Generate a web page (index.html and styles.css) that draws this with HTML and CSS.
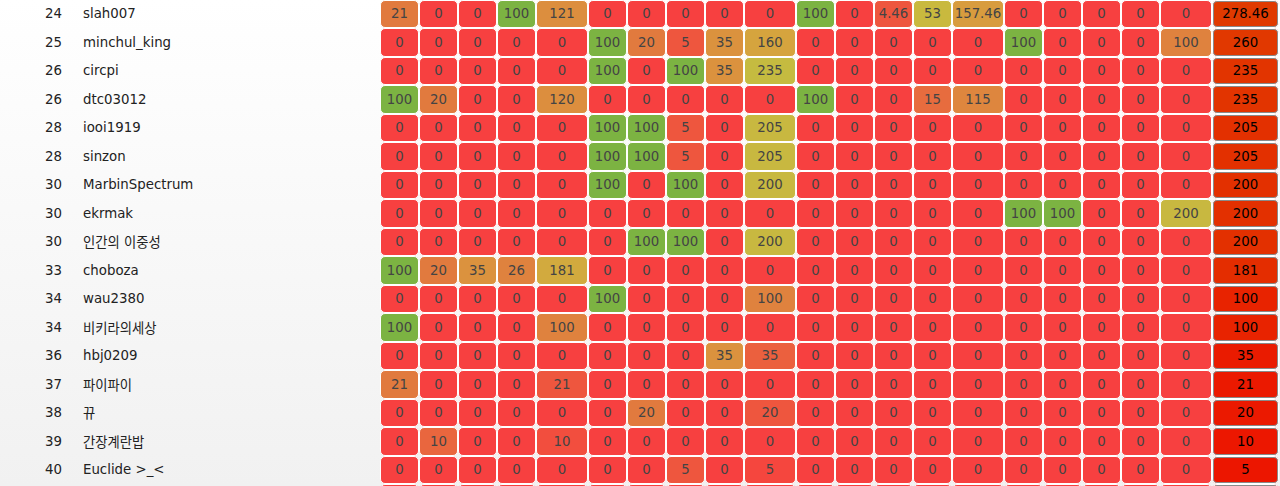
FILE: index.html
```html
<!DOCTYPE html>
<html lang="ko">
<head>
<meta charset="utf-8">
<title>Scoreboard</title>
<link rel="stylesheet" href="styles.css">
</head>
<body>
<div class="board">
  <div class="row">
    <span class="rank">24</span><span class="name">slah007</span>
    <span class="c h20">21</span><span class="c">0</span><span class="c">0</span><span class="c g">100</span><span class="c h30">121</span>
    <span class="c">0</span><span class="c">0</span><span class="c">0</span><span class="c">0</span><span class="c">0</span>
    <span class="c g">100</span><span class="c">0</span><span class="c h5">4.46</span><span class="c h53">53</span><span class="c h39">157.46</span>
    <span class="c">0</span><span class="c">0</span><span class="c">0</span><span class="c">0</span><span class="c">0</span>
    <span class="total" style="background:rgb(224,58,0)">278.46</span>
  </div>
  <div class="row">
    <span class="rank">25</span><span class="name">minchul_king</span>
    <span class="c">0</span><span class="c">0</span><span class="c">0</span><span class="c">0</span><span class="c">0</span>
    <span class="c g">100</span><span class="c h20">20</span><span class="c h5">5</span><span class="c h35">35</span><span class="c h40">160</span>
    <span class="c">0</span><span class="c">0</span><span class="c">0</span><span class="c">0</span><span class="c">0</span>
    <span class="c g">100</span><span class="c">0</span><span class="c">0</span><span class="c">0</span><span class="c h25">100</span>
    <span class="total" style="background:rgb(225,56,0)">260</span>
  </div>
  <div class="row">
    <span class="rank">26</span><span class="name">circpi</span>
    <span class="c">0</span><span class="c">0</span><span class="c">0</span><span class="c">0</span><span class="c">0</span>
    <span class="c g">100</span><span class="c">0</span><span class="c g">100</span><span class="c h35">35</span><span class="c h59">235</span>
    <span class="c">0</span><span class="c">0</span><span class="c">0</span><span class="c">0</span><span class="c">0</span>
    <span class="c">0</span><span class="c">0</span><span class="c">0</span><span class="c">0</span><span class="c">0</span>
    <span class="total" style="background:rgb(226,52,0)">235</span>
  </div>
  <div class="row">
    <span class="rank">26</span><span class="name">dtc03012</span>
    <span class="c g">100</span><span class="c h20">20</span><span class="c">0</span><span class="c">0</span><span class="c h30">120</span>
    <span class="c">0</span><span class="c">0</span><span class="c">0</span><span class="c">0</span><span class="c">0</span>
    <span class="c g">100</span><span class="c">0</span><span class="c">0</span><span class="c h15">15</span><span class="c h29">115</span>
    <span class="c">0</span><span class="c">0</span><span class="c">0</span><span class="c">0</span><span class="c">0</span>
    <span class="total" style="background:rgb(226,52,0)">235</span>
  </div>
  <div class="row">
    <span class="rank">28</span><span class="name">iooi1919</span>
    <span class="c">0</span><span class="c">0</span><span class="c">0</span><span class="c">0</span><span class="c">0</span>
    <span class="c g">100</span><span class="c g">100</span><span class="c h5">5</span><span class="c">0</span><span class="c h50">205</span>
    <span class="c">0</span><span class="c">0</span><span class="c">0</span><span class="c">0</span><span class="c">0</span>
    <span class="c">0</span><span class="c">0</span><span class="c">0</span><span class="c">0</span><span class="c">0</span>
    <span class="total" style="background:rgb(227,48,0)">205</span>
  </div>
  <div class="row">
    <span class="rank">28</span><span class="name">sinzon</span>
    <span class="c">0</span><span class="c">0</span><span class="c">0</span><span class="c">0</span><span class="c">0</span>
    <span class="c g">100</span><span class="c g">100</span><span class="c h5">5</span><span class="c">0</span><span class="c h50">205</span>
    <span class="c">0</span><span class="c">0</span><span class="c">0</span><span class="c">0</span><span class="c">0</span>
    <span class="c">0</span><span class="c">0</span><span class="c">0</span><span class="c">0</span><span class="c">0</span>
    <span class="total" style="background:rgb(227,48,0)">205</span>
  </div>
  <div class="row">
    <span class="rank">30</span><span class="name">MarbinSpectrum</span>
    <span class="c">0</span><span class="c">0</span><span class="c">0</span><span class="c">0</span><span class="c">0</span>
    <span class="c g">100</span><span class="c">0</span><span class="c g">100</span><span class="c">0</span><span class="c h50">200</span>
    <span class="c">0</span><span class="c">0</span><span class="c">0</span><span class="c">0</span><span class="c">0</span>
    <span class="c">0</span><span class="c">0</span><span class="c">0</span><span class="c">0</span><span class="c">0</span>
    <span class="total" style="background:rgb(227,48,0)">200</span>
  </div>
  <div class="row">
    <span class="rank">30</span><span class="name">ekrmak</span>
    <span class="c">0</span><span class="c">0</span><span class="c">0</span><span class="c">0</span><span class="c">0</span>
    <span class="c">0</span><span class="c">0</span><span class="c">0</span><span class="c">0</span><span class="c">0</span>
    <span class="c">0</span><span class="c">0</span><span class="c">0</span><span class="c">0</span><span class="c">0</span>
    <span class="c g">100</span><span class="c g">100</span><span class="c">0</span><span class="c">0</span><span class="c h50">200</span>
    <span class="total" style="background:rgb(227,48,0)">200</span>
  </div>
  <div class="row">
    <span class="rank">30</span><span class="name">인간의 이중성</span>
    <span class="c">0</span><span class="c">0</span><span class="c">0</span><span class="c">0</span><span class="c">0</span>
    <span class="c">0</span><span class="c g">100</span><span class="c g">100</span><span class="c">0</span><span class="c h50">200</span>
    <span class="c">0</span><span class="c">0</span><span class="c">0</span><span class="c">0</span><span class="c">0</span>
    <span class="c">0</span><span class="c">0</span><span class="c">0</span><span class="c">0</span><span class="c">0</span>
    <span class="total" style="background:rgb(227,48,0)">200</span>
  </div>
  <div class="row">
    <span class="rank">33</span><span class="name">choboza</span>
    <span class="c g">100</span><span class="c h20">20</span><span class="c h35">35</span><span class="c h25">26</span><span class="c h45">181</span>
    <span class="c">0</span><span class="c">0</span><span class="c">0</span><span class="c">0</span><span class="c">0</span>
    <span class="c">0</span><span class="c">0</span><span class="c">0</span><span class="c">0</span><span class="c">0</span>
    <span class="c">0</span><span class="c">0</span><span class="c">0</span><span class="c">0</span><span class="c">0</span>
    <span class="total" style="background:rgb(228,45,0)">181</span>
  </div>
  <div class="row">
    <span class="rank">34</span><span class="name">wau2380</span>
    <span class="c">0</span><span class="c">0</span><span class="c">0</span><span class="c">0</span><span class="c">0</span>
    <span class="c g">100</span><span class="c">0</span><span class="c">0</span><span class="c">0</span><span class="c h25">100</span>
    <span class="c">0</span><span class="c">0</span><span class="c">0</span><span class="c">0</span><span class="c">0</span>
    <span class="c">0</span><span class="c">0</span><span class="c">0</span><span class="c">0</span><span class="c">0</span>
    <span class="total" style="background:rgb(232,35,0)">100</span>
  </div>
  <div class="row">
    <span class="rank">34</span><span class="name">비키라의세상</span>
    <span class="c g">100</span><span class="c">0</span><span class="c">0</span><span class="c">0</span><span class="c h25">100</span>
    <span class="c">0</span><span class="c">0</span><span class="c">0</span><span class="c">0</span><span class="c">0</span>
    <span class="c">0</span><span class="c">0</span><span class="c">0</span><span class="c">0</span><span class="c">0</span>
    <span class="c">0</span><span class="c">0</span><span class="c">0</span><span class="c">0</span><span class="c">0</span>
    <span class="total" style="background:rgb(232,35,0)">100</span>
  </div>
  <div class="row">
    <span class="rank">36</span><span class="name">hbj0209</span>
    <span class="c">0</span><span class="c">0</span><span class="c">0</span><span class="c">0</span><span class="c">0</span>
    <span class="c">0</span><span class="c">0</span><span class="c">0</span><span class="c h35">35</span><span class="c h9">35</span>
    <span class="c">0</span><span class="c">0</span><span class="c">0</span><span class="c">0</span><span class="c">0</span>
    <span class="c">0</span><span class="c">0</span><span class="c">0</span><span class="c">0</span><span class="c">0</span>
    <span class="total" style="background:rgb(234,27,0)">35</span>
  </div>
  <div class="row">
    <span class="rank">37</span><span class="name">파이파이</span>
    <span class="c h20">21</span><span class="c">0</span><span class="c">0</span><span class="c">0</span><span class="c h5">21</span>
    <span class="c">0</span><span class="c">0</span><span class="c">0</span><span class="c">0</span><span class="c">0</span>
    <span class="c">0</span><span class="c">0</span><span class="c">0</span><span class="c">0</span><span class="c">0</span>
    <span class="c">0</span><span class="c">0</span><span class="c">0</span><span class="c">0</span><span class="c">0</span>
    <span class="total" style="background:rgb(235,25,0)">21</span>
  </div>
  <div class="row">
    <span class="rank">38</span><span class="name">뀨</span>
    <span class="c">0</span><span class="c">0</span><span class="c">0</span><span class="c">0</span><span class="c">0</span>
    <span class="c">0</span><span class="c h20">20</span><span class="c">0</span><span class="c">0</span><span class="c h5">20</span>
    <span class="c">0</span><span class="c">0</span><span class="c">0</span><span class="c">0</span><span class="c">0</span>
    <span class="c">0</span><span class="c">0</span><span class="c">0</span><span class="c">0</span><span class="c">0</span>
    <span class="total" style="background:rgb(235,25,0)">20</span>
  </div>
  <div class="row">
    <span class="rank">39</span><span class="name">간장계란밥</span>
    <span class="c">0</span><span class="c h10">10</span><span class="c">0</span><span class="c">0</span><span class="c h2">10</span>
    <span class="c">0</span><span class="c">0</span><span class="c">0</span><span class="c">0</span><span class="c">0</span>
    <span class="c">0</span><span class="c">0</span><span class="c">0</span><span class="c">0</span><span class="c">0</span>
    <span class="c">0</span><span class="c">0</span><span class="c">0</span><span class="c">0</span><span class="c">0</span>
    <span class="total" style="background:rgb(236,23,0)">10</span>
  </div>
  <div class="row">
    <span class="rank">40</span><span class="name">Euclide &gt;_&lt;</span>
    <span class="c">0</span><span class="c">0</span><span class="c">0</span><span class="c">0</span><span class="c">0</span>
    <span class="c">0</span><span class="c">0</span><span class="c h5">5</span><span class="c">0</span><span class="c h1">5</span>
    <span class="c">0</span><span class="c">0</span><span class="c">0</span><span class="c">0</span><span class="c">0</span>
    <span class="c">0</span><span class="c">0</span><span class="c">0</span><span class="c">0</span><span class="c">0</span>
    <span class="total" style="background:rgb(236,22,0)">5</span>
  </div>
  <div class="row" aria-hidden="true">
    <span class="rank"></span><span class="name"></span>
    <span class="c"></span><span class="c"></span><span class="c"></span><span class="c"></span><span class="c"></span>
    <span class="c"></span><span class="c"></span><span class="c"></span><span class="c"></span><span class="c"></span>
    <span class="c"></span><span class="c"></span><span class="c"></span><span class="c"></span><span class="c"></span>
    <span class="c"></span><span class="c"></span><span class="c"></span><span class="c"></span><span class="c"></span>
    <span class="total" style="background:rgb(236,21,0)"></span>
  </div>
</div>
</body>
</html>
```

FILE: styles.css
```css
html, body {
  margin: 0;
  padding: 0;
}

body {
  background: linear-gradient(#ffffff, #f1f1f1) fixed;
  font-family: "DejaVu Sans", "Noto Sans CJK KR", sans-serif;
  font-size: 10pt;
  color: #222;
}

.board {
  margin-top: -0.5px;
  display: grid;
  grid-template-columns: 1fr;
}

.row {
  display: grid;
  grid-template-columns:
    62px 318px
    repeat(4, 39px) 52px
    repeat(4, 39px) 52px
    repeat(4, 39px) 52px
    repeat(4, 39px) 52px
    67px;
  height: 28.5px;
}

.rank {
  align-self: center;
  text-align: right;
}

.name {
  align-self: center;
  padding-left: 21px;
  white-space: nowrap;
}

.c,
.total {
  display: flex;
  align-items: center;
  justify-content: center;
  border: 1px solid #fff;
  border-radius: 5px;
  background: #f74040;
  color: #444;
  white-space: nowrap;
}

.total {
  color: #000;
  box-shadow: inset 0 0 0 1px #8a8a8a;
}

.g   { background: #7cb342; }
.h1  { background: rgb(245, 70, 62); }
.h2  { background: rgb(242, 78, 62); }
.h5  { background: rgb(238, 86, 62); }
.h9  { background: rgb(235, 96, 62); }
.h10 { background: rgb(233, 102, 62); }
.h15 { background: rgb(231, 108, 62); }
.h20 { background: rgb(225, 122, 62); }
.h25 { background: rgb(223, 130, 62); }
.h29 { background: rgb(222, 134, 62); }
.h30 { background: rgb(220, 142, 62); }
.h35 { background: rgb(219, 146, 62); }
.h39 { background: rgb(216, 156, 62); }
.h40 { background: rgb(213, 164, 62); }
.h45 { background: rgb(210, 170, 62); }
.h50 { background: rgb(200, 184, 64); }
.h53 { background: rgb(201, 185, 62); }
.h59 { background: rgb(197, 187, 64); }
```
